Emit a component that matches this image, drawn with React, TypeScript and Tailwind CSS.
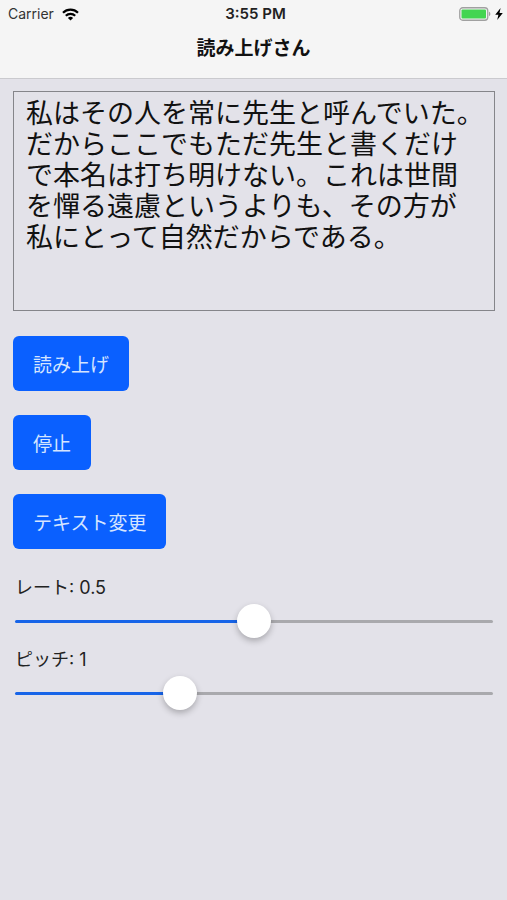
import { useState } from "react";

const sampleText = [
  "私はその人を常に先生と呼んでいた。",
  "だからここでもただ先生と書くだけ",
  "で本名は打ち明けない。これは世間",
  "を憚る遠慮というよりも、その方が",
  "私にとって自然だからである。",
].join("\n");

const buttons = ["読み上げ", "停止", "テキスト変更"];

const StatusBar = () => (
  <div className="flex h-7 items-center pr-1 pl-2 leading-4 text-[#333]">
    <div className="flex flex-1 items-center gap-2">
      <span className="text-sm">Carrier</span>
      <svg width="17" height="13" viewBox="0 0 17 13" fill="none" stroke="#000" strokeWidth="2.2">
        <path d="M1 4.8C5.2 0.6 11.8 0.6 16 4.8" />
        <path d="M3.8 7.7C6.4 5.2 10.6 5.2 13.2 7.7" />
        <path d="M8.5 12.5L5.9 9.9C7.4 8.5 9.6 8.5 11.1 9.9Z" fill="#000" stroke="none" />
      </svg>
    </div>
    <span className="text-[15px] font-semibold text-[#222]">3:55 PM</span>
    <div className="flex flex-1 items-center justify-end gap-1">
      <svg width="32" height="14" viewBox="0 0 32 14" fill="none">
        <rect x="0.75" y="0.75" width="28" height="12.5" rx="3" stroke="#a0a0a0" strokeWidth="1.3" />
        <rect x="2.5" y="2.5" width="24.5" height="9" rx="1" fill="#43d551" />
        <path d="M30 4.8C31.8 5.4 31.8 8.6 30 9.2Z" fill="#a0a0a0" />
      </svg>
      <svg width="8" height="12" viewBox="0 0 8 12" fill="#000">
        <path d="M5.6 0L0.2 6.7H3.4L2.2 12L7.8 5H4.5Z" />
      </svg>
    </div>
  </div>
);

type SliderProps = {
  id: string;
  label: string;
  min: number;
  max: number;
  value: number;
  onChange: (value: number) => void;
};

const Slider = ({ id, label, min, max, value, onChange }: SliderProps) => {
  const percent = ((value - min) / (max - min)) * 100;

  return (
    <div className="flex flex-col px-0.5">
      <label htmlFor={id} className="h-[38px] text-[18px] leading-[44px] text-[#222]">
        {label}: {value}
      </label>
      <input
        id={id}
        type="range"
        min={min}
        max={max}
        step={0.1}
        value={value}
        onChange={(e) => onChange(Number(e.target.value))}
        style={{
          "--track": `linear-gradient(to right, #1764e8 ${percent}%, #a9a9ad ${percent}%)`,
        } as React.CSSProperties}
        className="h-[34px] w-full cursor-pointer appearance-none bg-transparent [&::-webkit-slider-runnable-track]:h-[3px] [&::-webkit-slider-runnable-track]:rounded-full [&::-webkit-slider-runnable-track]:bg-(image:--track) [&::-webkit-slider-thumb]:-mt-4 [&::-webkit-slider-thumb]:size-[34px] [&::-webkit-slider-thumb]:appearance-none [&::-webkit-slider-thumb]:rounded-full [&::-webkit-slider-thumb]:bg-white [&::-webkit-slider-thumb]:shadow-[0_3px_6px_rgba(0,0,0,0.25)]"
      />
    </div>
  );
};

const App = () => {
  const [text, setText] = useState(sampleText);
  const [rate, setRate] = useState(0.5);
  const [pitch, setPitch] = useState(1);

  return (
    <div className="min-h-screen bg-[#e3e2e9] font-['Inter','Noto_Sans_CJK_JP',sans-serif]">
      {/* HEADER */}
      <header className="border-b border-[#cacace] bg-[#f5f5f5]">
        <StatusBar />
        <h1 className="h-[50px] text-center text-[19px] leading-[42px] font-bold text-[#111]">
          読み上げさん
        </h1>
      </header>

      <main className="pt-3 pr-3 pl-[13px]">
        <textarea
          aria-label="読み上げるテキスト"
          lang="ja"
          value={text}
          onChange={(e) => setText(e.target.value)}
          className="block h-[220px] w-full resize-none border border-[#85858a] bg-transparent py-1 pr-1 pl-3 font-['Noto_Sans_CJK_JP',sans-serif] text-[27px] leading-[31px] text-[#111] outline-none"
        />

        {/* BUTTONS */}
        <div className="flex flex-col items-start gap-6 pt-[25px]">
          {buttons.map((label) => (
            <button
              key={label}
              type="button"
              className="h-[55px] cursor-pointer rounded-md bg-[#0a60ff] px-5 pt-1.5 text-[19px] text-[#d5e5ff]"
            >
              {label}
            </button>
          ))}
        </div>

        {/* SLIDERS */}
        <div className="pt-[17px]">
          <Slider id="rate" label="レート" min={0} max={1} value={rate} onChange={setRate} />
          <Slider id="pitch" label="ピッチ" min={0.5} max={2} value={pitch} onChange={setPitch} />
        </div>
      </main>
    </div>
  );
};

export default App;
